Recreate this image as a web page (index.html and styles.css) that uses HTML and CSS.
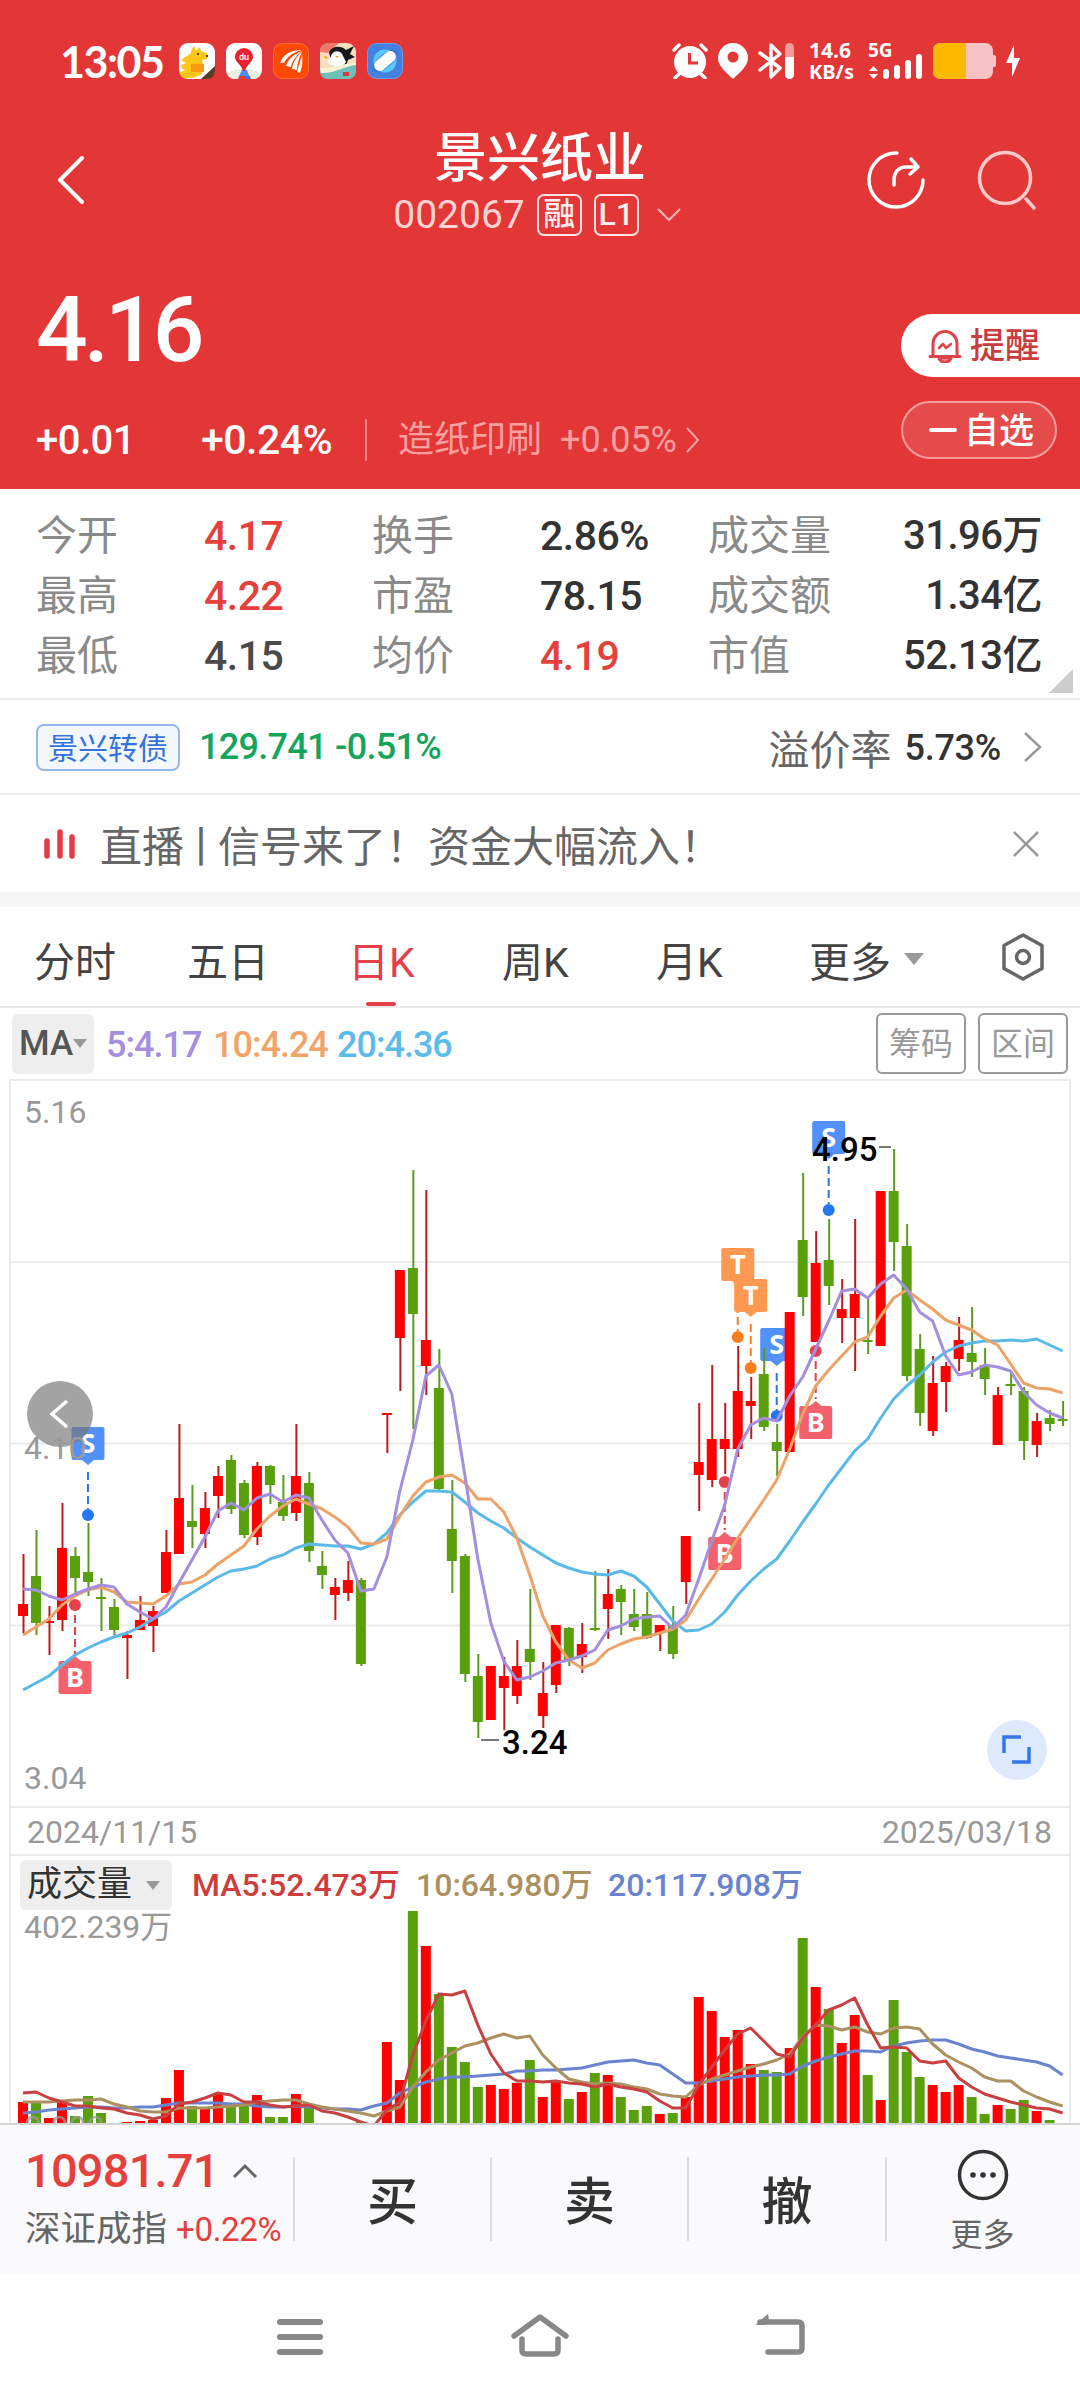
FILE: index.html
```html
<!DOCTYPE html>
<html lang="zh-CN">

<head>
    <meta charset="UTF-8">
    <meta name="viewport" content="width=device-width, initial-scale=1.0">
    <title>景兴纸业 002067</title>
    <link rel="stylesheet" href="styles.css">
</head>

<body>
    <header class="header">
        <!-- 状态栏 -->
        <div class="status">
            <span class="clock">13:05</span>
            <div class="apps">
                <svg class="app" viewBox="0 0 36 36">
                    <rect width="36" height="36" rx="9" fill="#fff"/>
                    <path d="M2 17l6-4 4-3c0-3 1-5 3-7l2 5 3-4 3 5c4 0 6 2 6 4l-1 3-5 1c1 2 1 4 0 5v9l-9 4H7c-4 0-6-2-6-6l6-2c-3 0-5-2-5-5l5-2z" fill="#ffc61a"/>
                    <path d="M12 21h13v8H12z" fill="#f79a12"/>
                    <circle cx="19" cy="11" r="1" fill="#222"/>
                    <circle cx="28" cy="13" r="1" fill="#222"/>
                    <path d="M36 23v5a8 8 0 0 1-8 8h-6z" fill="#5b392b"/>
                </svg>
                <svg class="app" viewBox="0 0 36 36">
                    <rect width="36" height="36" rx="9" fill="#fff"/>
                    <path d="M1 30l10-4h14l10 4c-1 4-4 6-8 6H9c-4 0-7-2-8-6z" fill="#e9f0e2"/>
                    <path d="M16 27h5l2 6H13z" fill="#4c8df0"/>
                    <path d="M13 33h6v3h-7z" fill="#e23a3a"/>
                    <path d="M19 33h5l1 3h-6z" fill="#3e70d8"/>
                    <path d="M18 5a9 9 0 0 1 9 9c0 5-6 7-8 14h-2C15 21 9 19 9 14a9 9 0 0 1 9-9z" fill="#ea2030"/>
                    <text class="du" x="18" y="17">du</text>
                </svg>
                <svg class="app" viewBox="0 0 36 36">
                    <rect x=".5" y=".5" width="35" height="35" rx="9" fill="#ff4800" stroke="#ff7136"/>
                    <path d="M7 20c3-8 10-13 22-13-9 2-15 7-18 13zM13 23c2-7 8-12 16-15-6 5-10 10-11 16zM19 26c1-7 5-13 10-17-3 6-5 12-5 18zM24 29c2-7 4-13 5-18 1 7 0 13-2 19z" fill="#fff"/>
                </svg>
                <svg class="app" viewBox="0 0 36 36">
                    <rect width="36" height="36" rx="9" fill="#f7dfc0"/>
                    <path d="M0 9c0-6 3-9 9-9h10L8 10z" fill="#f07a6a"/>
                    <path d="M9 9c3-6 12-7 17-2l8-4-4 8 5 3-7 3-2 6H12z" fill="#17181c"/>
                    <path d="M12 11c3-4 8-3 10 0l4 8c-3 6-15 6-18 0z" fill="#fff"/>
                    <path d="M6 16l-3-3 5 1zM15 13h4l-2 2z" fill="#f3a323"/>
                    <path d="M0 27c10 4 24-6 36-6v6c0 6-3 9-9 9H9c-6 0-9-3-9-9z" fill="#6cc0b9"/>
                    <path d="M0 25c12 2 20-5 36-5v2C24 23 14 31 1 30z" fill="#faf3d5"/>
                    <path d="M23 29h6v4h-6z" fill="#d13b42"/>
                </svg>
                <svg class="app" viewBox="0 0 36 36">
                    <rect x=".5" y=".5" width="35" height="35" rx="9" fill="#4480e0" stroke="#6c9cea"/>
                    <circle cx="18" cy="18" r="11.500" fill="#5ac8fa"/>
                    <ellipse cx="18" cy="18" rx="15" ry="7" transform="rotate(-40 18 18)" fill="#2d63d6" opacity=".5"/>
                    <rect x="5.500" y="12.500" width="25" height="11" rx="5.500" transform="rotate(-40 18 18)" fill="#fff"/>
                </svg>
            </div>

            <div class="status-right">
                <svg width="36" height="36" viewBox="0 0 36 36">
                    <circle cx="18" cy="19" r="16" fill="#fff"/>
                    <path d="M2 7l5-5M34 7l-5-5M7 31l-4 4M29 31l4 4" stroke="#fff" stroke-width="3.500" stroke-linecap="round"/>
                    <path d="M17.500 10v10H26" stroke="#e23637" stroke-width="3" fill="none"/>
                </svg>
                <svg width="30" height="36" viewBox="0 0 30 36">
                    <path d="M15 0a15 15 0 0 1 15 15c0 8-8 14-15 21C8 29 0 23 0 15A15 15 0 0 1 15 0z" fill="#fff"/>
                    <circle cx="15" cy="14" r="5.500" fill="#e23637"/>
                </svg>
                <svg width="36" height="36" viewBox="0 0 36 36">
                    <path d="M2 10l20 15-9 9V2l9 9L2 27" fill="none" stroke="#fff" stroke-width="3.500" stroke-linejoin="round" stroke-linecap="round"/>
                    <rect x="27" width="9" height="36" rx="4.500" fill="#f39a9b"/>
                    <path d="M27 14h9v17.500a4.500 4.500 0 0 1-9 0z" fill="#fff"/>
                </svg>
                <div class="speed"><span>14.6</span><span>KB/s</span></div>
                <svg class="signal" width="54" height="36" viewBox="0 0 54 36">
                    <text class="net" x="-1" y="14">5G</text>
                    <path d="M0 28l4.500-5 4.500 5zM0 31h9l-4.500 5z" fill="#fff"/>
                    <rect x="14" y="26" width="6" height="10" rx="3" fill="#fff"/>
                    <rect x="25" y="22" width="6" height="14" rx="3" fill="#fff"/>
                    <rect x="36" y="17" width="6" height="19" rx="3" fill="#fff"/>
                    <rect x="47" y="11" width="6" height="25" rx="3" fill="#fff"/>
                </svg>
                <svg width="63" height="36" viewBox="0 0 63 36">
                    <path d="M8 0h44c5 0 8 3 8 8v4h1.500c1 0 1.500 1 1.500 2v8c0 1-.5 2-1.500 2H60v4c0 5-3 8-8 8H8c-5 0-8-3-8-8V8c0-5 3-8 8-8z" fill="#f7c2c3"/>
                    <path d="M8 0h25v36H8c-5 0-8-3-8-8V8c0-5 3-8 8-8z" fill="#ffb800"/>
                </svg>
                <svg class="bolt" width="14" height="32" viewBox="0 0 14 32">
                    <path d="M8 0v13h6L6 32V18H0z" fill="#fff"/>
                </svg>
            </div>
        </div>

        <!-- 标题 -->
        <div class="title-bar">
            <svg class="back" width="30" height="52" viewBox="0 0 30 52">
                <path d="M26 4L4 26l22 22" fill="none" stroke="#fff" stroke-width="4" stroke-linecap="round" stroke-linejoin="round"/>
            </svg>
            <div class="title">
                <h1>景兴纸业</h1>
                <div class="code">
                    <span>002067</span>
                    <span class="badge">融</span>
                    <span class="badge">L1</span>
                    <svg width="24" height="14" viewBox="0 0 24 14">
                        <path d="M1 1l11 11L23 1" fill="none" stroke="#f5b5b5" stroke-width="2"/>
                    </svg>
                </div>
            </div>
            <div class="tools">
                <svg width="60" height="60" viewBox="0 0 60 60">
                    <path d="M31 3a27 27 0 1 0 26 27" fill="none" stroke="#fff" stroke-width="3.500" stroke-linecap="round"/>
                    <path d="M28 35v-5c0-8 5-13 12-13h12M45 9l7 8-8 7" fill="none" stroke="#fff" stroke-width="3.500" stroke-linecap="round" stroke-linejoin="round"/>
                </svg>
                <svg width="60" height="60" viewBox="0 0 60 60">
                    <circle cx="28" cy="28" r="25.500" fill="none" stroke="#ffc9c9" stroke-width="3.500"/>
                    <path d="M49 49l8 9" stroke="#ffc9c9" stroke-width="3.500" stroke-linecap="round"/>
                </svg>
            </div>
        </div>

        <!-- 现价 -->
        <div class="quote">
            <div>
                <div class="price">4.16</div>
                <div class="change">
                    <span class="diff">+0.01</span>
                    <span class="pct">+0.24%</span>
                    <span class="sector">造纸印刷</span>
                    <span class="sector-pct">+0.05%</span>
                    <svg width="14" height="26" viewBox="0 0 14 26">
                        <path d="M1 1l11 12L1 25" fill="none" stroke="#f7a0a0" stroke-width="2"/>
                    </svg>
                </div>
            </div>
            <div class="pills">
                <div class="pill alert">
                    <svg width="34" height="34" viewBox="0 0 34 34" fill="none" stroke="#de4349" stroke-width="3" stroke-linecap="round" stroke-linejoin="round">
                        <path d="M5 27V15a12 12.500 0 0 1 24 0v12M2 27.500h30"/>
                        <path d="M11 19l4-4 3 4 5-4" stroke-width="2.500"/>
                        <path d="M11 29a6 4 0 0 0 12 0z" fill="#fbd0d2"/>
                    </svg>
                    <span>提醒</span>
                </div>
                <div class="pill fav"><i class="minus"></i><span>自选</span></div>
            </div>
        </div>
    </header>

    <!-- 行情数据 -->
    <section class="stats">
        <span>今开</span><b class="up">4.17</b><span>换手</span><b>2.86%</b><span>成交量</span><b class="end">31.96万</b>
        <span>最高</span><b class="up">4.22</b><span>市盈</span><b>78.15</b><span>成交额</span><b class="end">1.34亿</b>
        <span>最低</span><b class="flat">4.15</b><span>均价</span><b class="up">4.19</b><span>市值</span><b class="end">52.13亿</b>
        <i class="corner"></i>
    </section>

    <section class="bond">
        <span class="bond-tag">景兴转债</span>
        <span class="bond-price">129.741 -0.51%</span>
        <span class="premium">溢价率</span>
        <span class="premium-val">5.73%</span>
        <svg width="20" height="32" viewBox="0 0 20 32">
            <path d="M2 2l15 14L2 30" fill="none" stroke="#999" stroke-width="2.500"/>
        </svg>
    </section>

    <section class="news">
        <svg width="32" height="30" viewBox="0 0 32 30">
            <path d="M3 12v15M16 3v24M28 8v19" stroke="#e23c46" stroke-width="5.500" stroke-linecap="round"/>
        </svg>
        <span class="news-text">直播<i>丨</i>信号来了！资金大幅流入！</span>
        <svg width="28" height="28" viewBox="0 0 28 28">
            <path d="M2 2l24 24M26 2L2 26" stroke="#999" stroke-width="2.500"/>
        </svg>
    </section>

    <!-- 周期切换 -->
    <nav class="tabs">
        <a>分时</a>
        <a>五日</a>
        <a class="active">日K</a>
        <a>周K</a>
        <a>月K</a>
        <a>更多<i class="caret"></i></a>
        <svg width="44" height="48" viewBox="0 0 44 48">
            <path d="M22 2l19 10.500v23L22 46 3 35.500v-23z" fill="none" stroke="#666" stroke-width="3.500" stroke-linejoin="round"/>
            <circle cx="22" cy="24" r="6.500" fill="none" stroke="#666" stroke-width="3.500"/>
        </svg>
    </nav>

    <div class="ma-row">
        <span class="ma-tag">MA<i class="caret small"></i></span>
        <span class="ma5">5:4.17</span>
        <span class="ma10">10:4.24</span>
        <span class="ma20">20:4.36</span>
        <span class="box first">筹码</span>
        <span class="box">区间</span>
    </div>

    <!-- K线和成交量 -->
    <main class="chart">
        <svg id="kline" width="1058" height="725" viewBox="11 1 1058 725"></svg>
        <div class="dates"><span>2024/11/15</span><span>2025/03/18</span></div>
        <div class="vol-head">
            <span class="vol-tag">成交量<i class="caret small"></i></span>
            <span class="v5">MA5:52.473万</span>
            <span class="v10">10:64.980万</span>
            <span class="v20">20:117.908万</span>
        </div>
        <svg id="volume" width="1058" height="212" viewBox="11 0 1058 212"></svg>
    </main>

    <!-- 交易栏 -->
    <footer class="trade">
        <div class="index">
            <div class="index-val">10981.71
                <svg width="26" height="16" viewBox="0 0 26 16">
                    <path d="M2 14L13 3l11 11" fill="none" stroke="#666" stroke-width="3"/>
                </svg>
            </div>
            <div class="index-name">深证成指<span>+0.22%</span></div>
        </div>
        <a>买</a>
        <a>卖</a>
        <a>撤</a>
        <div class="more">
            <svg width="52" height="52" viewBox="0 0 52 52">
                <circle cx="26" cy="26" r="23.500" fill="none" stroke="#333" stroke-width="3.500"/>
                <circle cx="16" cy="26" r="2.800" fill="#333"/>
                <circle cx="26" cy="26" r="2.800" fill="#333"/>
                <circle cx="36" cy="26" r="2.800" fill="#333"/>
            </svg>
            <span>更多</span>
        </div>
    </footer>

    <div class="navbar">
        <svg width="60" height="48" viewBox="0 0 60 48">
            <path d="M10 9h40M10 24h40M10 39h40" stroke="#888" stroke-width="6" stroke-linecap="round"/>
        </svg>
        <svg width="60" height="48" viewBox="0 0 60 48">
            <path d="M4 23L30 4l26 19" fill="none" stroke="#888" stroke-width="5.500" stroke-linecap="round" stroke-linejoin="round"/>
            <path d="M12 26v11q0 4 4 4h28q4 0 4-4V26" fill="none" stroke="#888" stroke-width="5.500" stroke-linecap="round"/>
        </svg>
        <svg width="60" height="48" viewBox="0 0 60 48">
            <path d="M10 9h38q4 0 4 4v22q0 4-4 4H18" fill="none" stroke="#888" stroke-width="5.500" stroke-linecap="round"/>
            <path d="M6 11L18 1l1 6-4 5H7z" fill="#888"/>
        </svg>
    </div>

    <script src="chart.js"></script>
</body>

</html>
```
FILE: styles.css
```css
* {
    box-sizing: border-box;
}

body {
    margin: 0;
    width: 1080px;
    height: 2400px;
    overflow: hidden;
    background: #fff;
    color: #333;
    font-family: Roboto, "Noto Sans CJK SC", sans-serif;
    display: flex;
    flex-direction: column;
}

svg {
    display: block;
    flex: none;
}

i {
    font-style: normal;
}

/* 顶部红色区域 */
.header {
    height: 489px;
    background: #e23637;
    color: #fff;
}

.status {
    height: 122px;
    padding: 0 19px 0 60px;
    display: flex;
    align-items: center;
}

.clock {
    width: 119px;
    font-family: Lato, sans-serif;
    font-weight: 700;
    font-size: 43px;
    letter-spacing: -1.500px;
}

.apps {
    display: flex;
    gap: 11px;
}

.app {
    width: 36px;
    height: 36px;
}

.du {
    font: 500 9px Roboto, sans-serif;
    fill: #fff;
    text-anchor: middle;
}

.status-right {
    margin-left: auto;
    display: flex;
    align-items: center;
    gap: 10px;
}

.speed {
    margin-left: 5px;
    width: 50px;
    display: flex;
    flex-direction: column;
    font: 700 20px/22px "Noto Sans", sans-serif;
}

.speed span:first-child {
    font-size: 21px;
}

.signal {
    overflow: visible;
}

.net {
    font: 700 19px "Noto Sans", sans-serif;
    fill: #fff;
}

.bolt {
    margin-right: 41px;
}

.title-bar {
    height: 130px;
    padding: 0 43px 0 56px;
    display: grid;
    grid-template-columns: 150px 1fr 171px;
}

.back {
    margin-top: 32px;
}

.title {
    display: flex;
    flex-direction: column;
    align-items: center;
}

h1 {
    margin: 7px 0 0 8px;
    font-size: 53px;
    font-weight: 500;
    line-height: 60px;
}

.code {
    display: flex;
    align-items: center;
    gap: 12px;
    margin: 4px 0 0 2px;
    font-size: 39px;
    line-height: 44px;
    color: #ffd2d2;
}

.badge {
    width: 45px;
    height: 42px;
    border: 2px solid #ffe3e3;
    border-radius: 7px;
    font-size: 32px;
    font-weight: 500;
    line-height: 37px;
    text-align: center;
    color: #ffecec;
}

.code svg {
    margin-left: 6px;
}

.tools {
    display: flex;
    gap: 51px;
    padding-top: 28px;
    justify-content: flex-end;
}

.quote {
    display: flex;
    justify-content: space-between;
}

.price {
    padding: 19px 0 0 36px;
    font-size: 91px;
    font-weight: 500;
    line-height: 118px;
    letter-spacing: -4px;
}

.change {
    margin-top: 30px;
    padding-left: 36px;
    height: 42px;
    display: flex;
    align-items: center;
    font-size: 40px;
    font-weight: 500;
    letter-spacing: -.5px;
}

.diff {
    width: 165px;
}

.pct {
    width: 166px;
    height: 42px;
    line-height: 43px;
    border-right: 2px solid #ee8384;
    font-size: 41px;
}

.sector {
    margin-left: 31px;
    width: 162px;
    font-size: 36px;
    line-height: 40px;
    font-weight: 400;
    letter-spacing: 0;
    color: #f7a0a0;
}

.sector-pct {
    width: 126px;
    font-size: 36px;
    font-weight: 400;
    letter-spacing: 0;
    color: #f7a0a0;
}

.pills {
    width: 179px;
    padding-top: 62px;
}

.pill {
    display: flex;
    align-items: center;
    font-size: 35px;
    font-weight: 500;
    line-height: 50px;
}

.pill span {
    padding-top: 3px;
}

.alert {
    height: 63px;
    padding-left: 27px;
    gap: 8px;
    border-radius: 32px 0 0 32px;
    background: #fff;
    color: #c93c40;
}

.fav {
    width: 156px;
    height: 58px;
    margin-top: 24px;
    padding-left: 26px;
    gap: 7px;
    border: 2px solid #f59c9d;
    border-radius: 29px;
    background: #e64b4c;
}

.minus {
    width: 28px;
    height: 4px;
    border-radius: 2px;
    background: #fff;
}

/* 行情数据 */
.stats {
    position: relative;
    height: 211px;
    padding: 17px 38px 0 36px;
    display: grid;
    grid-template-columns: 168px 168px 168px 168px 150px 1fr;
    grid-auto-rows: 60px;
    border-bottom: 2px solid #ebebeb;
    font-size: 41px;
    line-height: 60px;
}

.stats span {
    color: #8a8a8a;
}

.stats b {
    font-weight: 500;
    letter-spacing: -.5px;
    white-space: nowrap;
}

.stats .up {
    color: #e5403c;
}

.stats .flat {
    color: #4a4a4a;
}

.stats .end {
    justify-self: end;
    font-size: 40px;
}

.corner {
    position: absolute;
    right: 7px;
    bottom: 5px;
    border: solid transparent;
    border-width: 24px 0 0 24px;
    border-bottom: 24px solid #ccc;
    border-top: 0;
}

.bond {
    height: 95px;
    padding: 1px 37px 0 36px;
    display: flex;
    align-items: center;
    border-bottom: 2px solid #ebebeb;
}

.bond-tag {
    width: 144px;
    height: 47px;
    border: 2px solid #94b8ea;
    border-radius: 8px;
    background: #f3f8ff;
    color: #3672d9;
    font-size: 30px;
    line-height: 45px;
    text-align: center;
}

.bond-price {
    margin-left: 19px;
    color: #14a45c;
    font-size: 36px;
    font-weight: 500;
    letter-spacing: -.7px;
}

.premium {
    margin-left: auto;
    font-size: 41px;
    color: #666;
}

.premium-val {
    margin: 2px 22px 0 13px;
    font-size: 36px;
    font-weight: 500;
    letter-spacing: -.3px;
}

.news {
    height: 112px;
    padding: 0 40px 0 44px;
    display: flex;
    align-items: center;
    border-bottom: 15px solid #f7f7f7;
}

.news-text {
    margin: 0 auto 0 24px;
    font-size: 42px;
    color: #666;
}

.news-text i {
    margin: 0 -4px;
}

/* 周期切换 */
.tabs {
    height: 101px;
    padding: 0 35px 0 34px;
    display: grid;
    grid-template-columns: 153px 161px 154px 154px 153px 1fr 44px;
    align-items: center;
    justify-items: start;
    border-bottom: 2px solid #e8e8e8;
    font-size: 41px;
    color: #444;
}

.tabs a {
    height: 99px;
    padding-top: 5px;
    display: flex;
    align-items: center;
}

.tabs .active {
    position: relative;
    color: #e5404a;
}

.tabs .active::after {
    content: "";
    position: absolute;
    left: 50%;
    bottom: 0;
    width: 30px;
    height: 4px;
    margin-left: -15px;
    border-radius: 2px;
    background: #e5404a;
}

.caret {
    margin-left: 13px;
    border: solid transparent;
    border-width: 12px 10px 0;
    border-top-color: #999;
}

.caret.small {
    border-width: 9px 7px 0;
    margin-left: 4px;
}

.ma-row {
    height: 71px;
    padding: 0 12px;
    display: flex;
    align-items: center;
    font-size: 36px;
    font-weight: 500;
    white-space: nowrap;
}

.ma-tag {
    width: 82px;
    height: 60px;
    margin-right: 12px;
    padding-left: 7px;
    display: flex;
    align-items: center;
    border-radius: 6px;
    background: #eee;
    color: #555;
    font-size: 35px;
}

.ma-tag .caret {
    margin-left: 0;
}

.ma5 {
    width: 107px;
    color: #a48fe0;
}

.ma10 {
    width: 124px;
    color: #f0a468;
}

.ma20 {
    color: #5bbcec;
}

.ma5,
.ma10,
.ma20 {
    padding-top: 2px;
    letter-spacing: -1px;
}

.box {
    width: 90px;
    height: 61px;
    border: 2px solid #999;
    border-radius: 6px;
    color: #999;
    font-size: 32px;
    font-weight: 400;
    line-height: 59px;
    text-align: center;
}

.box.first {
    margin: 0 12px 0 auto;
}

/* 图表 */
.chart {
    height: 1044px;
    margin: 0 9px;
    border: solid #ebebeb;
    border-width: 2px 2px 0;
}

#kline {
    border-bottom: 2px solid #ebebeb;
    height: 727px;
}

.dates {
    height: 48px;
    padding: 2px 17px 0 16px;
    display: flex;
    justify-content: space-between;
    align-items: center;
    border-bottom: 2px solid #ebebeb;
    color: #999;
    font-size: 32px;
}

.vol-head {
    height: 55px;
    padding: 4px 0 1px 9px;
    display: flex;
    align-items: center;
    font-size: 32px;
    line-height: 40px;
    font-weight: 500;
    white-space: nowrap;
}

.vol-tag {
    width: 152px;
    height: 50px;
    margin-right: 20px;
    padding-left: 7px;
    display: flex;
    align-items: center;
    border-radius: 6px;
    background: #eee;
    font-size: 35px;
    font-weight: 400;
}

.vol-tag .caret {
    margin-left: 14px;
}

.v5 {
    width: 224px;
    color: #d03c3c;
}

.v10 {
    width: 192px;
    color: #ab9060;
}

.v20 {
    color: #6a83cf;
}

.axis {
    font-size: 32px;
    fill: #999;
}

.peak {
    font-size: 33px;
    font-weight: 500;
    fill: #000;
}

.mark {
    font: 700 27px "Noto Sans", sans-serif;
    fill: #fff;
    text-anchor: middle;
}

/* 底部交易栏 */
.trade {
    height: 151px;
    display: grid;
    grid-template-columns: 293px 197px 197px 198px 1fr;
    border-top: 2px solid #d4d4d6;
    background: #fafafc;
}

.trade a {
    height: 84px;
    margin-top: 32px;
    border-left: 2px solid #dcdcde;
    font-size: 51px;
    font-weight: 500;
    line-height: 92px;
    text-align: center;
}

.index {
    padding: 18px 0 0 25px;
}

.index-val {
    display: flex;
    align-items: center;
    gap: 15px;
    font-size: 47px;
    font-weight: 500;
    line-height: 56px;
    letter-spacing: -.8px;
    color: #e5403c;
}

.index-val svg {
    margin-left: -2px;
}

.index-name {
    margin-top: 4px;
    font-size: 35.500px;
    line-height: 52px;
    color: #666;
    white-space: nowrap;
}

.index-name span {
    margin-left: 9px;
    font-size: 33px;
    letter-spacing: -.3px;
    color: #e5403c;
}

.more {
    height: 84px;
    margin-top: 32px;
    padding-right: 2px;
    border-left: 2px solid #dcdcde;
    display: flex;
    flex-direction: column;
    align-items: center;
    font-size: 32px;
    line-height: 40px;
    color: #666;
}

.more svg {
    margin: -8px 0 14px;
}

.navbar {
    height: 126px;
    padding: 39px 270px 0;
    display: flex;
    justify-content: space-between;
}
```
FILE: chart.js
```js
// 每根K线: [涨跌, 最高, 实体上, 实体下, 最低, 成交量], 单位为图上像素
const candles = [
    ['r', 474, 524, 536, 553, 21], ['g', 450, 496, 543, 555, 20], ['r', 526, 541, 543, 575, 5],
    ['r', 423, 468, 540, 551, 22], ['g', 467, 476, 498, 513, 7], ['g', 443, 492, 502, 516, 27],
    ['g', 498, 517, 519, 551, 10], ['g', 519, 527, 550, 555, 0], ['r', 551, 555, 558, 599, 1],
    ['r', 516, 540, 550, 550, 2], ['r', 526, 531, 546, 572, 3], ['r', 450, 472, 513, 513, 25],
    ['r', 344, 418, 474, 474, 53], ['g', 405, 441, 447, 468, 17], ['r', 412, 428, 454, 468, 15],
    ['r', 386, 396, 416, 438, 30], ['g', 375, 380, 429, 434, 16], ['g', 400, 403, 455, 458, 18],
    ['r', 382, 386, 457, 465, 28], ['g', 385, 386, 405, 424, 6], ['g', 395, 422, 436, 441, 6],
    ['r', 344, 396, 433, 441, 29], ['g', 392, 403, 471, 482, 18], ['g', 471, 486, 495, 509, 0],
    ['r', 498, 507, 515, 540, 0], ['r', 481, 500, 513, 521, 0], ['g', 498, 500, 584, 586, 1],
    null,
    ['r', 334, 333, 335, 373, 81], ['r', 190, 190, 258, 311, 43], ['g', 90, 188, 234, 349, 213],
    ['r', 110, 260, 286, 315, 177], ['g', 269, 308, 409, 411, 129], ['g', 400, 449, 481, 513, 76],
    ['g', 474, 476, 594, 602, 61], ['g', 574, 596, 642, 658, 36], ['r', 586, 586, 640, 640, 38],
    ['r', 577, 596, 608, 650, 34], ['r', 560, 586, 616, 624, 40], ['g', 509, 569, 582, 600, 63],
    ['r', 582, 613, 636, 648, 26], ['r', 545, 545, 605, 613, 42], ['g', 547, 548, 580, 586, 24],
    ['r', 543, 564, 577, 593, 31], ['g', 491, 548, 550, 551, 50], ['r', 489, 514, 529, 559, 48],
    ['g', 505, 509, 522, 555, 26], ['g', 509, 534, 547, 551, 13], ['g', 512, 534, 558, 559, 17],
    ['r', 545, 545, 553, 571, 9], ['g', 526, 545, 574, 579, 10], ['r', 456, 456, 502, 524, 26],
    ['r', 323, 382, 395, 431, 126], ['r', 285, 359, 400, 407, 112], ['r', 323, 359, 369, 394, 86],
    ['r', 266, 311, 369, 377, 93], ['r', 297, 321, 326, 359, 59], ['g', 268, 294, 347, 351, 53],
    ['g', 344, 362, 371, 396, 51], ['r', 232, 232, 372, 372, 75], ['g', 93, 160, 217, 236, 185],
    ['r', 151, 183, 262, 262, 136], ['g', 139, 180, 206, 225, 114], ['r', 199, 229, 238, 263, 80],
    ['r', 139, 214, 238, 291, 108], ['g', 218, 260, 261, 274, 48], ['r', 111, 111, 266, 266, 23],
    ['g', 69, 111, 162, 191, 123], ['g', 144, 166, 296, 301, 71], ['g', 254, 269, 333, 346, 46],
    ['r', 276, 303, 351, 356, 38], ['r', 282, 286, 302, 332, 31], ['r', 237, 260, 279, 291, 38],
    ['g', 227, 273, 282, 297, 26], ['g', 268, 285, 299, 315, 9], ['r', 307, 315, 365, 365, 18],
    ['g', 291, 304, 306, 315, 14], ['g', 307, 311, 361, 380, 23], ['r', 333, 341, 365, 377, 12],
    ['g', 330, 338, 344, 351, 3], ['g', 321, 339, 340, 346, 0]
];

const ma = {
    '#5bb9e8': [610, 603, 596, 585, 575, 568, 562, 557, 553, 547, 539, 532, 521, 513, 505, 497, 491, 489, 486, 479, 475, 468, 464, 465, 466, 466, 469, 464, 453, 435, 422, 411, 411, 412, 422, 433, 441, 448, 458, 467, 475, 483, 488, 492, 494, 495, 491, 496, 507, 524, 541, 551, 550, 544, 532, 515, 501, 489, 479, 461, 442, 424, 405, 388, 371, 359, 338, 319, 306, 295, 282, 272, 266, 263, 261, 261, 260, 261, 259, 265, 271],
    '#eda268': [555, 547, 539, 525, 516, 510, 507, 512, 522, 523, 524, 516, 504, 502, 495, 484, 475, 466, 449, 436, 426, 419, 424, 429, 437, 447, 463, 464, 459, 436, 416, 402, 397, 395, 403, 419, 419, 432, 458, 495, 536, 562, 580, 588, 583, 570, 564, 559, 557, 553, 549, 540, 519, 499, 479, 458, 439, 420, 400, 369, 334, 306, 290, 276, 262, 257, 236, 218, 210, 220, 229, 240, 245, 250, 259, 265, 284, 303, 308, 309, 313],
    '#a38fdd': [509, 510, 516, 520, 514, 509, 505, 507, 524, 532, 539, 527, 503, 480, 457, 431, 423, 430, 418, 414, 422, 415, 418, 440, 460, 473, 511, 509, 477, 411, 360, 296, 285, 314, 395, 479, 543, 581, 600, 597, 591, 583, 580, 576, 570, 550, 546, 539, 537, 536, 548, 535, 499, 461, 425, 369, 345, 338, 341, 316, 297, 269, 241, 211, 209, 218, 204, 195, 209, 232, 241, 276, 295, 292, 285, 287, 291, 312, 325, 333, 338]
};

// 成交量均线, 数值为距底部高度
const volMa = {
    '#6a83cf': [10, 11, 13, 14, 15, 16, 16, 15, 15, 16, 16, 18, 20, 20, 20, 20, 19, 19, 17, 16, 16, 17, 16, 15, 14, 14, 13, 17, 20, 30, 36, 41, 44, 46, 46, 47, 48, 49, 52, 52, 53, 53, 54, 55, 58, 61, 62, 63, 60, 58, 49, 40, 40, 42, 44, 46, 47, 48, 48, 49, 57, 62, 66, 69, 72, 72, 71, 77, 80, 82, 83, 83, 79, 74, 71, 67, 65, 63, 61, 57, 48],
    '#ab9060': [21, 21, 21, 22, 23, 23, 24, 19, 16, 12, 11, 11, 15, 15, 15, 16, 17, 18, 21, 22, 23, 23, 19, 16, 14, 12, 10, 7, 12, 16, 36, 51, 63, 70, 77, 80, 85, 89, 85, 87, 68, 55, 44, 41, 39, 40, 39, 36, 34, 29, 27, 26, 38, 44, 48, 52, 56, 59, 63, 69, 86, 98, 97, 93, 96, 91, 89, 95, 96, 94, 79, 68, 61, 55, 46, 42, 42, 32, 26, 21, 17],
    '#c94040': [30, 31, 25, 21, 17, 17, 15, 14, 10, 8, 4, 7, 19, 21, 25, 30, 28, 21, 21, 18, 16, 17, 18, 12, 10, 6, 1, -3, 13, 21, 68, 102, 129, 128, 132, 98, 69, 50, 42, 42, 41, 42, 40, 39, 36, 39, 36, 34, 31, 22, 15, 15, 38, 56, 73, 89, 95, 82, 69, 66, 85, 98, 113, 118, 125, 98, 75, 76, 75, 62, 60, 62, 45, 36, 29, 25, 21, 18, 15, 14, 10]
};

// 买卖点: [K线序号, 类型, 方框顶部, 圆点位置]
const marks = [
    [5, 'S', 347, 435], [4, 'B', 581, 525], [55, 'T', 168, 257], [56, 'T', 199, 288],
    [58, 'S', 248, 336], [62, 'S', 41, 130], [54, 'B', 457, 402], [61, 'B', 326, 271]
];

const markColor = {
    S: ['#5290fa', '#2577ee'],
    B: ['#f3616c', '#e6404a'],
    T: ['#ff9850', '#fa7d1e']
};

const candleColor = { r: '#fe0000', g: '#5aa00c' };
const wickColor = { r: '#b81c1c', g: '#5c9922' };
const volH = 212;
const x = i => 23 + i * 12.995;

function line(values, color, toY) {
    const pts = values.map((v, i) => `${x(i)},${toY(v)}`).join(' ');
    return `<polyline points="${pts}" fill="none" stroke="${color}" stroke-width="3" stroke-linejoin="round"/>`;
}

function drawMark([i, type, top, dot]) {
    const cx = x(i);
    const [fill, dark] = markColor[type];
    const tip = type === 'B'
        ? `M${cx - 6} ${top}l6 -5l6 5z`
        : `M${cx - 6} ${top + 33}l6 5l6 -5z`;
    const from = type === 'B' ? dot + 10 : top + 45;
    const to = type === 'B' ? top - 7 : dot - 6;
    return `<rect x="${cx - 16.5}" y="${top}" width="33" height="33" rx="2" fill="${fill}"/>
        <path d="${tip}" fill="${fill}"/>
        <path d="M${cx} ${from}V${to}" stroke="${dark}" stroke-width="2" stroke-dasharray="8 4"/>
        <circle cx="${cx}" cy="${dot}" r="6" fill="${dark}"/>
        <text class="mark" x="${cx}" y="${top + 26}">${type}</text>`;
}

let k = '';
for (const y of [182, 363.5, 545.5]) {
    k += `<path d="M11 ${y}H1069" stroke="#ebebeb" stroke-width="2"/>`;
}
k += marks.map(drawMark).join('');

candles.forEach((c, i) => {
    if (!c) return;
    const [dir, high, top, bottom, low] = c;
    k += `<path d="M${x(i) + .5} ${high}V${low}" stroke="${wickColor[dir]}" stroke-width="2"/>`;
    k += `<rect x="${x(i) - 5}" y="${top}" width="10" height="${Math.max(bottom - top, 2)}" fill="${candleColor[dir]}"/>`;
});

for (const color in ma) k += line(ma[color], color, v => v);

k += `
    <circle cx="60" cy="334" r="33" fill="#777" fill-opacity=".68"/>
    <path d="M67 321L52 334l15 13" fill="none" stroke="#fff" stroke-width="3.500"/>
    <text class="axis" x="24" y="43">5.16</text>
    <text class="axis" x="24" y="379">4.10</text>
    <text class="axis" x="24" y="709">3.04</text>
    <text class="peak" x="812" y="81">4.95</text>
    <path d="M879 67h12M481 660h18" stroke="#777" stroke-width="2"/>
    <text class="peak" x="502" y="674">3.24</text>
    <circle cx="1017" cy="670" r="30" fill="#dfe9fd"/>
    <path d="M1004 673v-16h17M1029 667v15h-17" fill="none" stroke="#3577e2" stroke-width="3.500"/>`;
document.getElementById('kline').innerHTML = k;

let v = '';
candles.forEach((c, i) => {
    if (c) v += `<rect x="${x(i) - 5}" y="${volH - c[5]}" width="10" height="${c[5]}" fill="${candleColor[c[0]]}"/>`;
});
for (const color in volMa) v += line(volMa[color], color, h => volH - h);
v += `<text class="axis" x="24" y="27">402.239万</text>
    <text class="axis" x="24" y="227" fill-opacity=".8">0.000</text>`;
document.getElementById('volume').innerHTML = v;
```
